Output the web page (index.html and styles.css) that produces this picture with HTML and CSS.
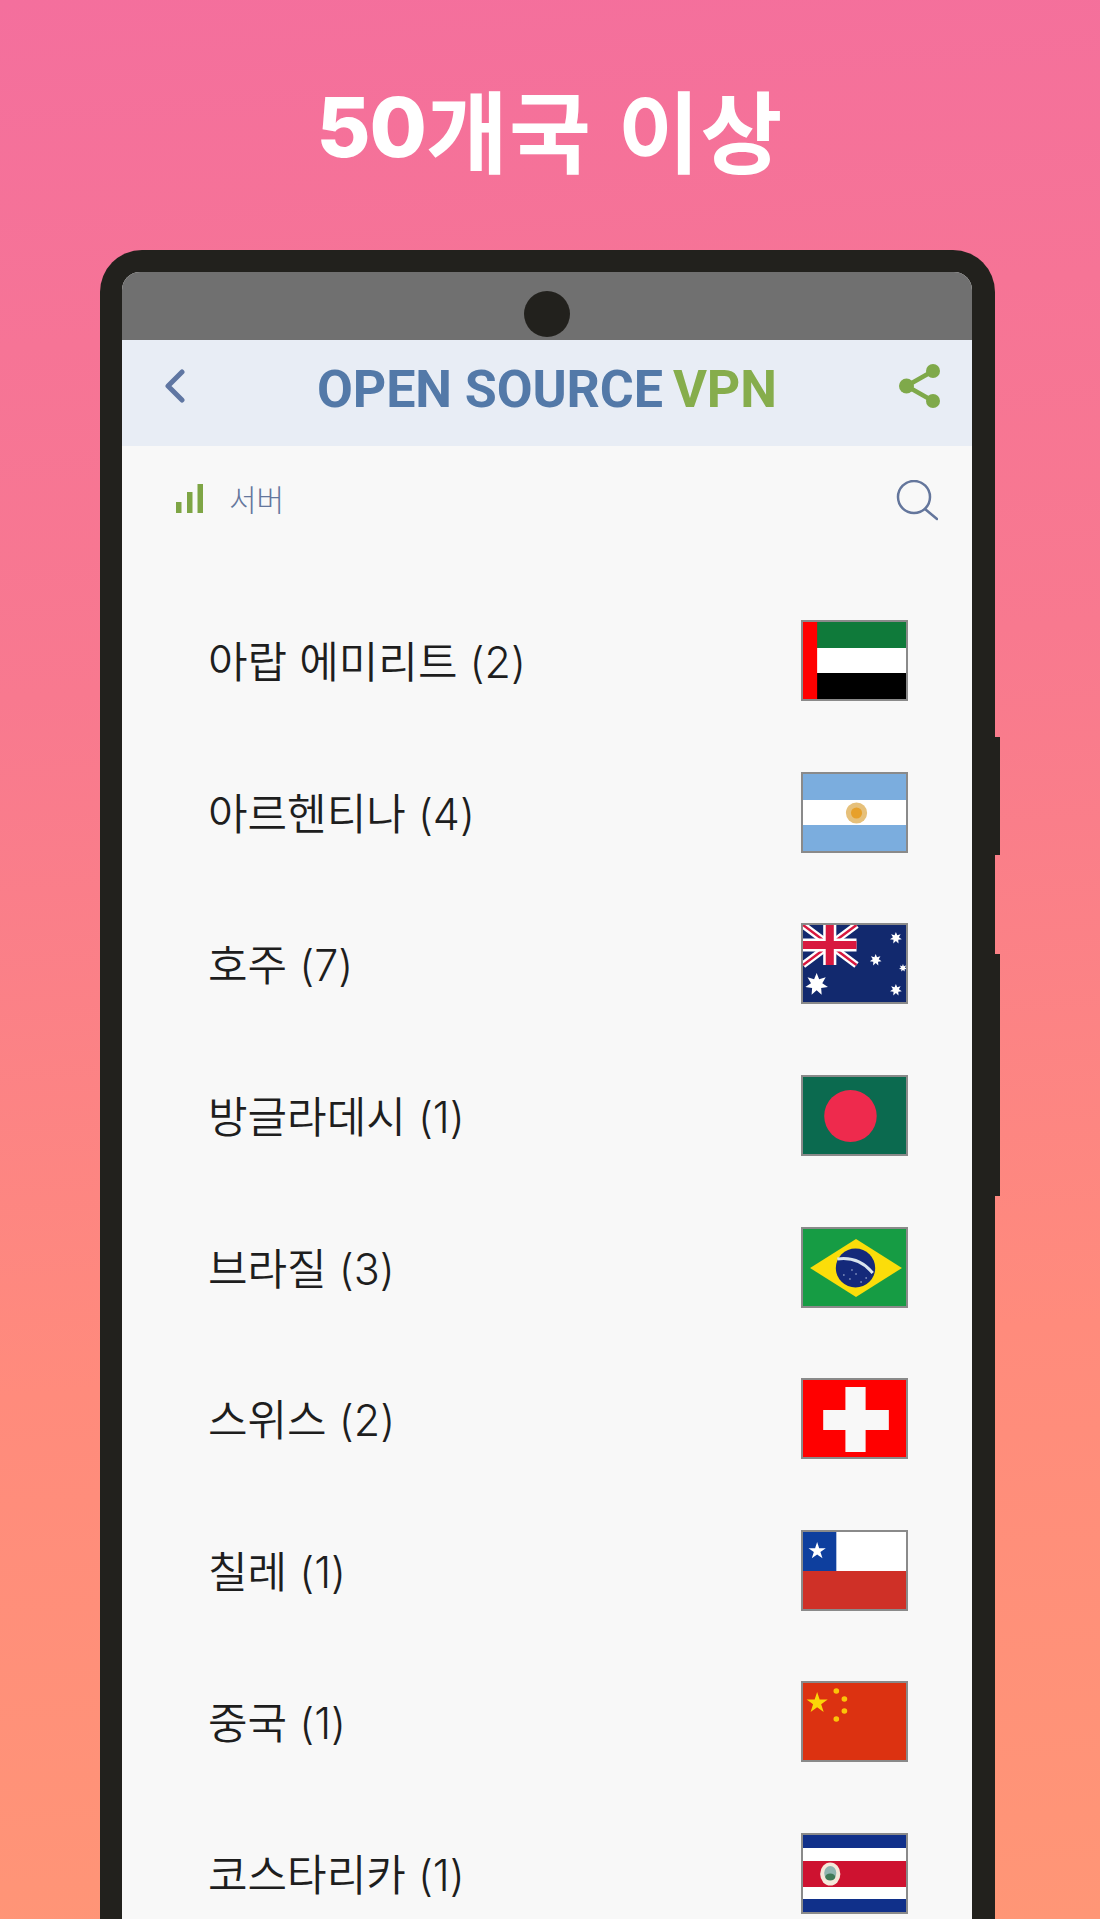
FILE: index.html
```html
<!DOCTYPE html>
<html lang="ko">
<head>
<meta charset="utf-8">
<title>Open Source VPN</title>
<link rel="stylesheet" href="styles.css">
</head>
<body>
<svg class="defs" width="0" height="0" aria-hidden="true">
  <symbol id="s5" viewBox="-1 -1 2 2"><polygon points="0,-1 .225,-.309 .951,-.309 .363,.118 .588,.809 0,.382 -.588,.809 -.363,.118 -.951,-.309 -.225,-.309"/></symbol>
  <symbol id="s7" viewBox="-1 -1 2 2"><polygon points="0,-1 .217,-.45 .782,-.623 .487,-.111 .975,.223 .39,.312 .434,.901 0,.5 -.434,.901 -.39,.312 -.975,.223 -.487,-.111 -.782,-.623 -.217,-.45"/></symbol>
</svg>
<main class="page">
  <h1 class="headline"><span class="headline-num">50</span>개국 이상</h1>
  <div class="phone">
    <span class="side-btn side-btn-a"></span>
    <span class="side-btn side-btn-b"></span>
    <div class="screen">
      <div class="status"><span class="camera"></span></div>
      <header class="appbar">
        <svg class="back" viewBox="0 0 20 34"><path d="M17 3 3 17l14 14"/></svg>
        <div class="logo"><span class="logo-a">OPEN SOURCE</span><span class="logo-b">VPN</span></div>
        <svg class="share" viewBox="0 0 42 44"><path class="share-line" d="M34 7 7.500 22 34 37"/><circle cx="34" cy="7" r="7"/><circle cx="7.500" cy="22" r="7.500"/><circle cx="34" cy="37" r="7"/></svg>
      </header>
      <div class="subbar">
        <div class="subtitle">
          <svg class="bars" viewBox="0 0 27 29"><rect x="0" y="18" width="5.500" height="11"/><rect x="11" y="8" width="5.500" height="21"/><rect x="21.500" y="0" width="5.500" height="29"/></svg>
          <span class="subtitle-text">서버</span>
        </div>
        <svg class="search" viewBox="0 0 43 41"><circle cx="19" cy="17" r="16"/><path d="M30 29l12 10"/></svg>
      </div>
      <ul class="list">
        <li class="row"><span class="name">아랍 에미리트 (2)</span><span class="flag"><svg viewBox="0 0 102 77" preserveAspectRatio="none"><rect width="102" height="26" fill="#0f7a3a"/><rect y="26" width="102" height="25" fill="#fff"/><rect y="51" width="102" height="26" fill="#000"/><rect width="14" height="77" fill="#f00"/></svg></span></li>
        <li class="row"><span class="name">아르헨티나 (4)</span><span class="flag"><svg viewBox="0 0 102 77" preserveAspectRatio="none"><rect width="102" height="77" fill="#7badde"/><rect y="26" width="102" height="25" fill="#fff"/><circle cx="53" cy="39" r="10.500" fill="#e6c07a"/><circle cx="53" cy="39" r="5.500" fill="#e7a02a"/></svg></span></li>
        <li class="row"><span class="name">호주 (7)</span><span class="flag"><svg viewBox="0 0 102 77" preserveAspectRatio="none"><rect width="102" height="77" fill="#12296e"/><path d="M0 0l53 40M53 0 0 40" stroke="#fff" stroke-width="7"/><path d="M0 0l53 40M53 0 0 40" stroke="#d8193f" stroke-width="2.500"/><path d="M26.500 0v40M0 20h53" stroke="#fff" stroke-width="13"/><path d="M26.500 0v40M0 20h53" stroke="#d8193f" stroke-width="8"/><use href="#s7" x="2" y="48" width="23" height="23" fill="#fff"/><use href="#s7" x="86" y="7" width="12" height="12" fill="#fff"/><use href="#s7" x="66" y="29" width="12" height="12" fill="#fff"/><use href="#s7" x="95" y="39" width="8" height="8" fill="#fff"/><use href="#s7" x="86" y="59" width="12" height="12" fill="#fff"/></svg></span></li>
        <li class="row"><span class="name">방글라데시 (1)</span><span class="flag"><svg viewBox="0 0 102 77" preserveAspectRatio="none"><rect width="102" height="77" fill="#0b6a4f"/><circle cx="47" cy="39" r="26" fill="#ee2a4d"/></svg></span></li>
        <li class="row"><span class="name">브라질 (3)</span><span class="flag"><svg viewBox="0 0 102 77" preserveAspectRatio="none"><rect width="102" height="77" fill="#169c44"/><polygon points="7,39 52.500,10 98,39 52.500,68" fill="#fbdd0a"/><circle cx="52" cy="39" r="19.500" fill="#14297a"/><path d="M34 30c14-2 26 3 35 14" fill="none" stroke="#d9e4ee" stroke-width="3"/><path d="M40 46h1M46 50h1M52 45h1M57 53h1M62 49h1M48 41h1" stroke="#c8d4ea" stroke-width="1.500"/></svg></span></li>
        <li class="row"><span class="name">스위스 (2)</span><span class="flag"><svg viewBox="0 0 102 77" preserveAspectRatio="none"><rect width="102" height="77" fill="#f00"/><path d="M42 7h20v23h23v20H62v22H42V50H20V30h22z" fill="#f8f8f8"/></svg></span></li>
        <li class="row"><span class="name">칠레 (1)</span><span class="flag"><svg viewBox="0 0 102 77" preserveAspectRatio="none"><rect width="102" height="39" fill="#fff"/><rect y="39" width="102" height="38" fill="#cf3027"/><rect width="33" height="39" fill="#0e3f9e"/><use href="#s5" x="5" y="10" width="18" height="18" fill="#fff"/></svg></span></li>
        <li class="row"><span class="name">중국 (1)</span><span class="flag"><svg viewBox="0 0 102 77" preserveAspectRatio="none"><rect width="102" height="77" fill="#dc3211"/><use href="#s5" x="3" y="9" width="22" height="22" fill="#fbd608"/><circle cx="33" cy="8" r="2.800" fill="#fbc408"/><circle cx="41" cy="16" r="2.800" fill="#fbc408"/><circle cx="41" cy="28" r="2.800" fill="#fbc408"/><circle cx="33" cy="36" r="2.800" fill="#fbc408"/></svg></span></li>
        <li class="row"><span class="name">코스타리카 (1)</span><span class="flag"><svg viewBox="0 0 102 77" preserveAspectRatio="none"><rect width="102" height="77" fill="#10308a"/><rect y="13" width="102" height="51" fill="#fff"/><rect y="26" width="102" height="26" fill="#ce1230"/><ellipse cx="27" cy="39" rx="10" ry="11.500" fill="#f4e8da"/><ellipse cx="27" cy="38" rx="6" ry="7" fill="#8fb5b0"/><ellipse cx="27" cy="42" rx="5" ry="3.500" fill="#3f7a58"/></svg></span></li>
      </ul>
    </div>
  </div>
</main>
</body>
</html>
```

FILE: styles.css
```css
* { box-sizing: border-box; }
html, body { margin: 0; padding: 0; }
body {
  width: 1100px;
  height: 1919px;
  overflow: hidden;
  font-family: "Noto Sans CJK KR", "Noto Sans", sans-serif;
}
.defs { position: absolute; }
.page {
  height: 1919px;
  overflow: hidden;
  background: linear-gradient(176deg, #f46f9d 0%, #f8798f 35%, #ff8b7c 70%, #ff9676 100%);
}
.headline {
  height: 250px;
  margin: 0;
  padding: 4px 0 0 0;
  display: flex;
  align-items: center;
  justify-content: center;
  color: #fff;
  font-size: 89px;
  font-weight: 700;
  line-height: 1;
  letter-spacing: 1px;
  white-space: pre;
}
.headline-num {
  font-family: Inter, "Noto Sans", sans-serif;
  font-size: 83px;
  font-weight: 800;
  letter-spacing: -1px;
}
.phone {
  position: relative;
  width: 895px;
  height: 1760px;
  margin-left: 100px;
  padding: 22px 23px 0 22px;
  background: #22211d;
  border-radius: 42px 42px 0 0;
}
.side-btn {
  position: absolute;
  left: 895px;
  width: 5px;
  background: #22211d;
}
.side-btn-a { top: 487px; height: 118px; }
.side-btn-b { top: 704px; height: 242px; }
.screen {
  height: 100%;
  background: #f8f8f8;
  border-radius: 18px 18px 0 0;
  overflow: hidden;
}
.status {
  height: 68px;
  background: #707070;
  display: flex;
  justify-content: center;
  padding-top: 19px;
}
.camera {
  width: 46px;
  height: 46px;
  border-radius: 50%;
  background: #22211d;
}
.appbar {
  position: relative;
  height: 106px;
  background: #e8edf5;
  padding: 24px 31px 0 43px;
  display: flex;
  justify-content: space-between;
  align-items: flex-start;
}
.back {
  width: 20px;
  height: 34px;
  margin-top: 5px;
  fill: none;
  stroke: #5f76a2;
  stroke-width: 5;
  stroke-linecap: round;
  stroke-linejoin: round;
}
.logo {
  position: absolute;
  left: 195px;
  top: 19px;
  font-family: Roboto, "Liberation Sans", sans-serif;
  font-size: 52px;
  font-weight: 700;
  line-height: 61px;
  letter-spacing: -0.1px;
  white-space: nowrap;
  display: flex;
  gap: 10px;
}
.logo-a { color: #5379a8; }
.logo-b { color: #86ad4c; }
.share {
  width: 42px;
  height: 44px;
  fill: #7fa94a;
}
.share-line {
  fill: none;
  stroke: #7fa94a;
  stroke-width: 4.500;
}
.subbar {
  height: 139px;
  padding: 32px 34px 0 54px;
  display: flex;
  justify-content: space-between;
  align-items: flex-start;
}
.subtitle {
  display: flex;
  align-items: center;
  gap: 26px;
  height: 40px;
}
.bars {
  width: 27px;
  height: 29px;
  fill: #7ea545;
}
.subtitle-text {
  color: #64769c;
  font-size: 30px;
  font-weight: 300;
  line-height: 40px;
}
.search {
  width: 43px;
  height: 41px;
  margin-top: 2px;
  fill: none;
  stroke: #64769c;
  stroke-width: 2.500;
  stroke-linecap: round;
}
.list {
  list-style: none;
  margin: 0;
  padding: 0;
}
.row {
  height: 151.600px;
  padding: 0 64px 0 86px;
  display: flex;
  align-items: center;
  justify-content: space-between;
}
.name {
  padding-top: 3px;
  color: #1e1e1e;
  font-family: Inter, "Noto Sans CJK KR", sans-serif;
  font-size: 43px;
  font-weight: 350;
  line-height: 60px;
  white-space: nowrap;
}
.flag {
  width: 107px;
  height: 81px;
  border: 2px solid #8a8a8a;
  display: block;
}
.flag svg {
  display: block;
  width: 103px;
  height: 77px;
}
```
